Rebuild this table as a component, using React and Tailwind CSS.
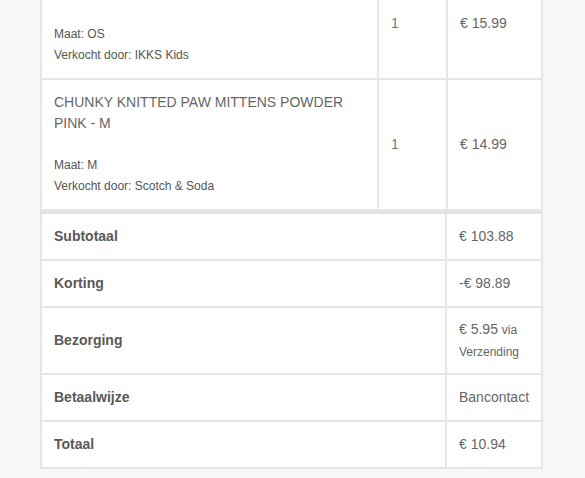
import React from "react";

const cell = "border-2 border-[#e6e6e6] px-3 py-3 align-middle";

function Totals({ label, children, tight }) {
    return (
        <tr>
            <td className={`${cell} w-[405px] font-bold text-[#595959]`}>{label}</td>
            <td className={`${cell} text-[#666666] ${tight ? "py-[10px]" : ""}`}>{children}</td>
        </tr>
    );
}

export default function App() {
    return (
        <div className="bg-[#f8f8f8] w-[585px] h-[478px] overflow-hidden font-['Liberation_Sans',Arial,sans-serif] text-[14px] leading-[21px]">
            <div className="pl-[40px] w-[545px]">
                <table className="w-[503px] border-collapse bg-white table-fixed">
                    <tbody>
                        <tr className="h-[79px]">
                            <td className={`${cell} border-t-0 w-[337px] align-top pt-[24px] pb-[10px] text-[12px] text-[#555555]`}>
                                <div>Maat: OS</div>
                                <div>Verkocht door: IKKS Kids</div>
                            </td>
                            <td className={`${cell} border-t-0 w-[69px] align-top pt-[13px] text-[#777777]`}>1</td>
                            <td className={`${cell} border-t-0 align-top pt-[13px] text-[#666666]`}>€ 15.99</td>
                        </tr>
                        <tr>
                            <td className={`${cell} text-[#666666]`}>
                                <div>CHUNKY KNITTED PAW MITTENS POWDER PINK - M</div>
                                <div className="h-[21px]"></div>
                                <div className="text-[12px] text-[#555555]">Maat: M</div>
                                <div className="text-[12px] text-[#555555]">Verkocht door: Scotch &amp; Soda</div>
                            </td>
                            <td className={`${cell} text-[#777777]`}>1</td>
                            <td className={`${cell} text-[#666666]`}>€ 14.99</td>
                        </tr>
                    </tbody>
                </table>
                <table className="w-[503px] border-collapse bg-white table-fixed border-t-[3px] border-[#e2e2e2]">
                    <tbody>
                        <Totals label="Subtotaal">€ 103.88</Totals>
                        <Totals label="Korting">-€ 98.89</Totals>
                        <Totals label="Bezorging" tight>
                            <div className="leading-[22px]">
                                <div>
                                    € 5.95 <span className="text-[12px]">via</span>
                                </div>
                                <div className="text-[12px]">Verzending</div>
                            </div>
                        </Totals>
                        <Totals label="Betaalwijze">Bancontact</Totals>
                        <Totals label="Totaal">€ 10.94</Totals>
                    </tbody>
                </table>
            </div>
        </div>
    );
}
